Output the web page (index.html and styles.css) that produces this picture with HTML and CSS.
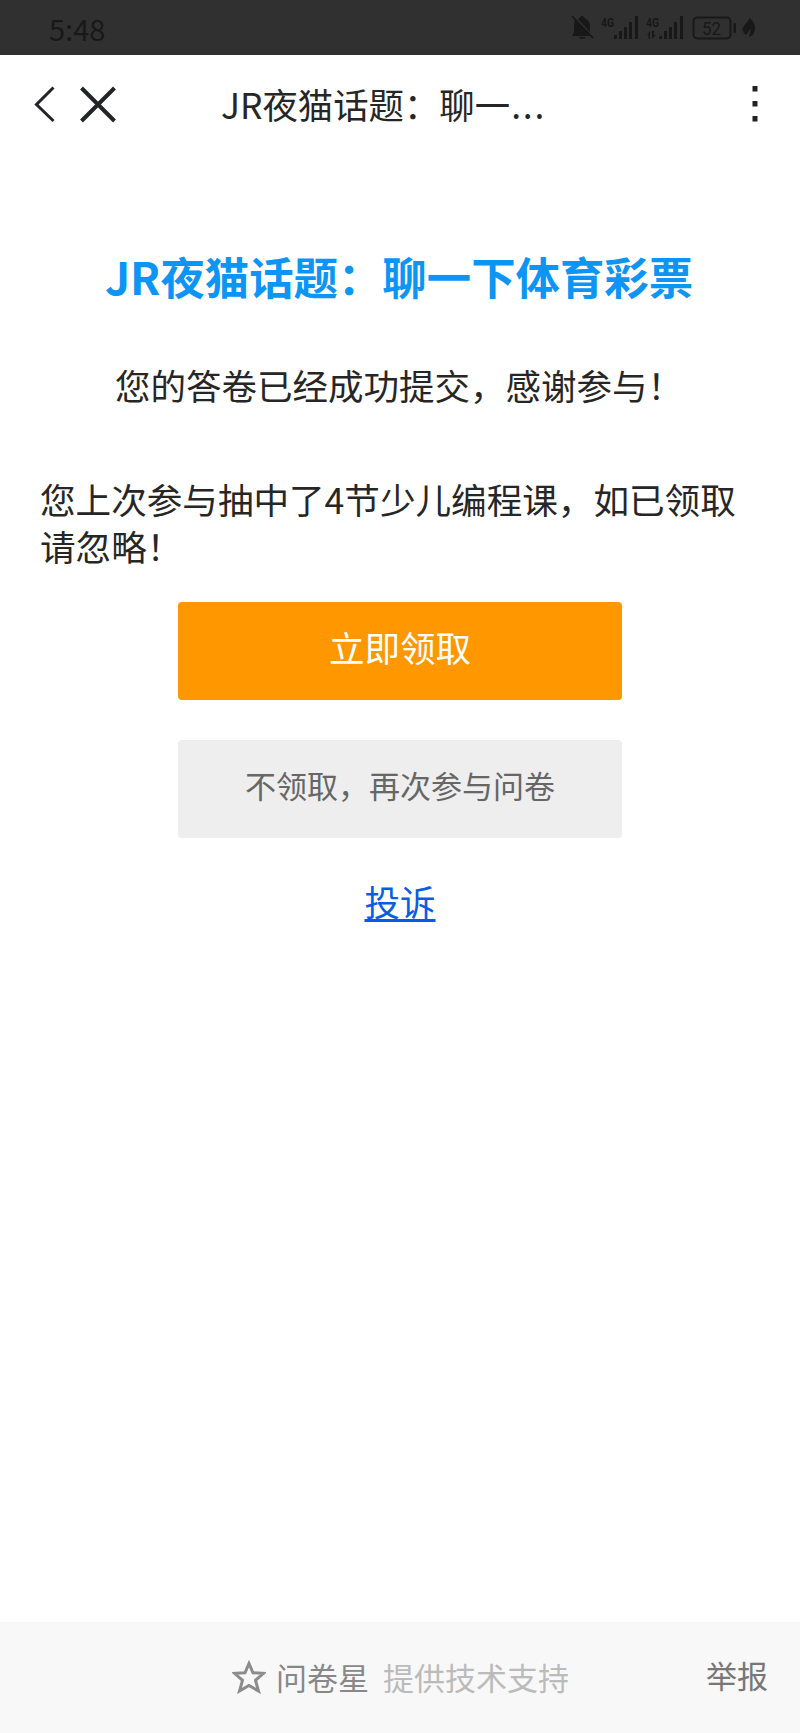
FILE: index.html
```html
<!DOCTYPE html>
<html lang="zh-CN">
<head>
<meta charset="utf-8">
<title>JR夜猫话题：聊一下体育彩票</title>
<link rel="stylesheet" href="styles.css">
</head>
<body>
<div class="screen">
  <div class="status">
    <span class="clock">5:48</span>
    <svg class="status-icons" width="190" height="30" viewBox="570 12 190 30" fill="#181818">
      <path d="M575 19l16 17H572l2-4v-7q0-3 1-6zM578 19q2-1 3-3h2q1 2 3 3 4 2 4 7v6zM578 37h8q-4 4-8 0z"/>
      <path d="M572 16l21 22" stroke="#181818" stroke-width="1.8"/>
      <text x="601" y="27" class="net" textLength="13" lengthAdjust="spacingAndGlyphs">4G</text>
      <path d="M614 35h3v4h-3zM619 31h3v8h-3zM624 27h3v12h-3zM629 22h3v17h-3zM635 16h3v23h-3z"/>
      <text x="646" y="27" class="net" textLength="13" lengthAdjust="spacingAndGlyphs">4G</text>
      <path d="M647 35l3-4v8h-1.500v-4zM652 31v8l4-4h-2v-4zM659 36h3v3h-3zM664 31h3v8h-3zM669 27h3v12h-3zM674 22h3v17h-3zM680 16h3v23h-3z"/>
      <rect x="693.5" y="17.500" width="37" height="21" rx="4" fill="none" stroke="#181818" stroke-width="2"/>
      <text x="702" y="34.500" class="charge" textLength="19" lengthAdjust="spacingAndGlyphs">52</text>
      <rect x="733.500" y="23" width="2.500" height="10" rx="1"/>
      <path d="M750 18q5 5 5 10 0 7-6 9l2-9-5 7q-6-5-2-9 2-3 6-8z"/>
    </svg>
  </div>
  <header class="nav">
    <svg class="nav-icons" width="84" height="40" viewBox="33 84 84 40" fill="none" stroke="#222428">
      <path d="M53.500 87.500L36.500 104.500l17 16.500" stroke-width="3"/>
      <path d="M81.500 88l33 33M114.500 88l-33 33" stroke-width="4"/>
    </svg>
    <span class="nav-title">JR夜猫话题：聊一<span class="dots">...</span></span>
    <svg class="more" width="6" height="38" viewBox="0 0 6 38" fill="#222">
      <path d="M.5 1h5v5.500h-5zM.5 16h5v5.500h-5zM.5 31h5v5.500h-5z"/>
    </svg>
  </header>
  <main class="content">
    <h1 class="title">JR夜猫话题：聊一下体育彩票</h1>
    <p class="submitted">您的答卷已经成功提交，感谢参与！</p>
    <p class="prize">您上次参与抽中了4节少儿编程课，如已领取请忽略！</p>
    <button class="btn primary">立即领取</button>
    <button class="btn secondary">不领取，再次参与问卷</button>
    <a class="complain" href="#">投诉</a>
  </main>
  <footer class="footer">
    <svg class="star" width="34" height="34" viewBox="0 0 34 34" fill="none" stroke="#8c8c8c" stroke-width="3">
      <path d="M17 3.500l4 9.300 10.500.5-8 7 3 10.700-9.500-5.500-9.500 5.500 3-10.700-8-7 10.500-.5z"/>
    </svg>
    <span class="brand">问卷星</span>
    <span class="support">提供技术支持</span>
    <span class="report">举报</span>
  </footer>
</div>
</body>
</html>
```
FILE: styles.css
```css
* { box-sizing: border-box; }
body {
  margin: 0;
  background: #fff;
  color: #262626;
  font-family: "Noto Sans CJK SC", sans-serif;
  font-size: 35.6px;
}
.screen {
  display: flex;
  flex-direction: column;
  height: 1733px;
}
.status {
  display: flex;
  justify-content: space-between;
  height: 55px;
  padding: 12px 40px 0 49px;
  background: #303030;
  color: #181818;
}
.status-icons { flex: none; }
.clock { margin-top: -2px; font-size: 29px; line-height: 36px; }
.net { font: bold 12px Roboto, sans-serif; }
.charge { font: 18px Roboto, sans-serif; }
.nav {
  display: flex;
  align-items: center;
  height: 99px;
  padding: 0 42px 2px 33px;
}
.nav-icons { flex: none; }
.nav-title {
  margin-left: 104px;
  font-size: 35.4px;
  line-height: 50px;
  white-space: nowrap;
}
.dots { letter-spacing: 1.8px; margin-left: 1px; }
.more { margin-left: auto; }
.content {
  flex: 1;
  display: flex;
  flex-direction: column;
  align-items: center;
  padding: 92px 40px 0;
}
.title {
  margin: 0 2px 0 0;
  color: #0c95f5;
  font-size: 44.4px;
  font-weight: 700;
  line-height: 60px;
  white-space: nowrap;
}
.submitted { margin: 54px 2px 0 0; font-size: 35.5px; line-height: 50px; }
.prize { align-self: stretch; margin: 65px -4px 0 0; line-height: 47px; }
.btn {
  width: 444px;
  height: 98px;
  padding: 0 0 10px;
  border: 0;
  border-radius: 4px;
  font-family: inherit;
}
.primary { margin-top: 33px; background: #ff9800; color: #fff; font-size: 35.5px; }
.secondary { margin-top: 40px; background: #eee; color: #666; font-size: 31px; }
.complain {
  margin-top: 38px;
  color: #0a5ce6;
  font-size: 35.5px;
  line-height: 50px;
  text-decoration-thickness: 2.5px;
  text-underline-offset: 3px;
}
.footer {
  display: flex;
  align-items: center;
  height: 111px;
  padding: 0 32px 2px 232px;
  background: #f8f8f8;
  font-size: 31px;
  line-height: 44px;
}
.brand { margin-left: 10px; color: #888; }
.support { margin-left: 14px; color: #bbb; }
.report { margin-left: auto; margin-bottom: 4px; color: #777; }
```
